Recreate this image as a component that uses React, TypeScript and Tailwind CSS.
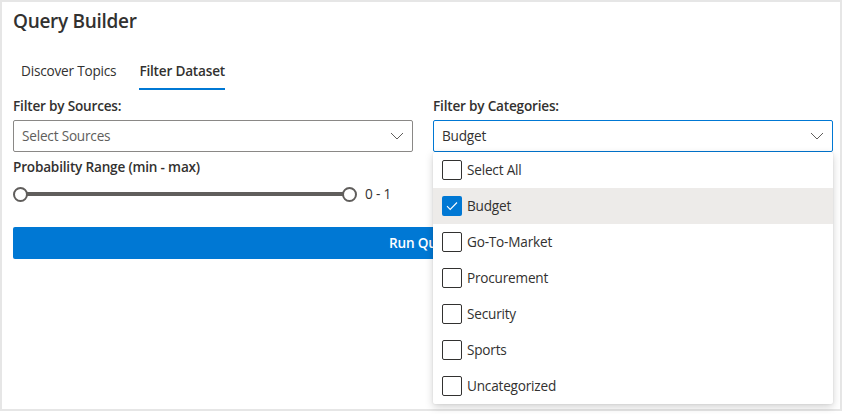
import React from "react";

const items = [
  "Select All",
  "Budget",
  "Go-To-Market",
  "Procurement",
  "Security",
  "Sports",
  "Uncategorized",
];

function Chevron() {
  return (
    <svg width="14" height="8" viewBox="0 0 14 8" fill="none">
      <path d="M1 1l6 6 6-6" stroke="#605e5c" strokeWidth="1" />
    </svg>
  );
}

export default function App() {
  return (
    <div
      className="w-[844px] h-[414px] bg-white text-[#323130]"
      style={{ fontFamily: '"Open Sans", "Noto Sans", sans-serif' }}
    >
      <div className="w-[842px] h-[411px] border-2 border-[#e6e6e6] pl-[11px] pr-[7px] flex flex-col text-[13.6px] tracking-[-0.2px]">
        <div className="h-[36px] flex items-center text-[19px] font-semibold tracking-[-0.3px] mt-[1px]">
          Query Builder
        </div>
        <div className="flex mt-[14px] h-[38px]">
          <div className="pl-[8px] flex items-center h-[36px]">Discover Topics</div>
          <div className="ml-[23px] relative flex items-center h-[36px] font-semibold">
            Filter Dataset
            <div className="absolute left-0 right-0 bottom-[-1px] h-[2px] bg-[#0078d4]" />
          </div>
        </div>
        <div className="grid grid-cols-2 gap-x-[20px] mt-[4px]">
          <div className="flex flex-col">
            <div className="h-[22px] flex items-center font-semibold">
              Filter by Sources:
            </div>
            <div className="mt-[3px] h-[32px] border border-[#8a8886] rounded-[2px] flex items-center justify-between pl-[8px] pr-[8px] text-[#605e5c]">
              <span>Select Sources</span>
              <Chevron />
            </div>
            <div className="mt-[4px] h-[22px] flex items-center font-semibold">
              Probability Range (min - max)
            </div>
            <div className="mt-[3px] h-[26px] flex items-center">
              <div className="relative w-[344px] h-[16px] flex items-center">
                <div className="absolute left-[7px] right-[7px] h-[4px] bg-[#605e5c] rounded-[2px]" />
                <div className="absolute left-0 w-[15px] h-[15px] rounded-full border-2 border-[#605e5c] bg-white" />
                <div className="absolute right-0 w-[15px] h-[15px] rounded-full border-2 border-[#605e5c] bg-white" />
              </div>
              <span className="ml-[8px]">0 - 1</span>
            </div>
          </div>
          <div className="flex flex-col relative">
            <div className="h-[22px] flex items-center font-semibold">
              Filter by Categories:
            </div>
            <div className="mt-[3px] h-[32px] border border-[#0078d4] rounded-[2px] flex items-center justify-between pl-[8px] pr-[8px]">
              <span>Budget</span>
              <Chevron />
            </div>
            <div className="absolute left-0 right-0 top-[57px] z-10 bg-white shadow-[0_3px_8px_rgba(0,0,0,0.18),0_0_2px_rgba(0,0,0,0.1)] rounded-[2px]">
              {items.map((it) => {
                const checked = it === "Budget";
                return (
                  <div
                    key={it}
                    className={`h-[36px] flex items-center pl-[9px] ${
                      checked ? "bg-[#edebe9]" : ""
                    }`}
                  >
                    <div
                      className={`w-[20px] h-[20px] rounded-[2px] flex items-center justify-center ${
                        checked ? "bg-[#0078d4]" : "border border-[#323130]"
                      }`}
                    >
                      {checked && (
                        <svg width="12" height="10" viewBox="0 0 12 10" fill="none">
                          <path d="M1 5.2l3.2 3.2L11 1.5" stroke="white" strokeWidth="1.1" />
                        </svg>
                      )}
                    </div>
                    <span className="ml-[5px]">{it}</span>
                  </div>
                );
              })}
            </div>
          </div>
        </div>
        <div className="mt-[20px] h-[32px] bg-[#0078d4] rounded-[2px] flex items-center justify-center text-white font-semibold w-[820px]">
          Run Query
        </div>
      </div>
    </div>
  );
}
